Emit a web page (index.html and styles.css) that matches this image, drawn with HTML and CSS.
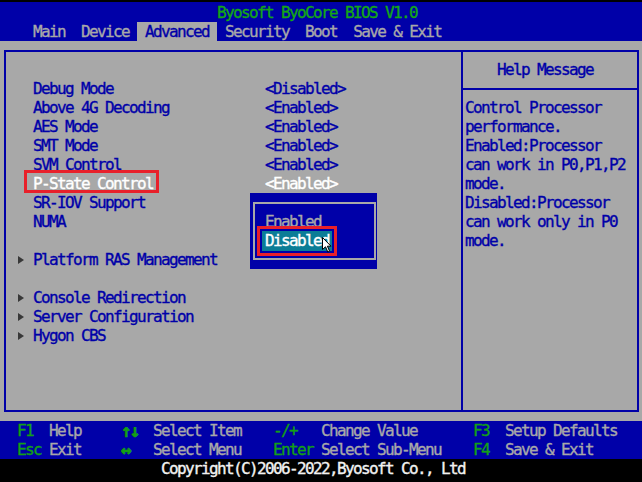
FILE: index.html
```html
<!DOCTYPE html>
<html lang="en">
<head>
  <meta charset="UTF-8">
  <meta name="viewport" content="width=device-width, initial-scale=1.0">
  <title>Byosoft ByoCore BIOS V1.0</title>
  <link rel="stylesheet" href="styles.css">
</head>
<body>
  <div class="screen">
    <div class="topbar">
      <div class="title">Byosoft ByoCore BIOS V1.0</div>
      <div class="tabs">
        <span class="tab">Main</span>
        <span class="tab">Device</span>
        <span class="tab active">Advanced</span>
        <span class="tab">Security</span>
        <span class="tab">Boot</span>
        <span class="tab">Save &amp; Exit</span>
      </div>
    </div>

    <div class="main">
      <div class="frame">
        <div class="settings">
          <div class="row"><span class="label">Debug Mode</span><span class="value">&lt;Disabled&gt;</span></div>
          <div class="row"><span class="label">Above 4G Decoding</span><span class="value">&lt;Enabled&gt;</span></div>
          <div class="row"><span class="label">AES Mode</span><span class="value">&lt;Enabled&gt;</span></div>
          <div class="row"><span class="label">SMT Mode</span><span class="value">&lt;Enabled&gt;</span></div>
          <div class="row"><span class="label">SVM Control</span><span class="value">&lt;Enabled&gt;</span></div>
          <div class="row selected"><span class="label"><span class="mark">P-State Control</span></span><span class="value">&lt;Enabled&gt;</span></div>
          <div class="row"><span class="label">SR-IOV Support</span></div>
          <div class="row"><span class="label">NUMA</span></div>
          <div class="row"></div>
          <div class="row"><span class="arrow"></span><span class="label">Platform RAS Management</span></div>
          <div class="row"></div>
          <div class="row"><span class="arrow"></span><span class="label">Console Redirection</span></div>
          <div class="row"><span class="arrow"></span><span class="label">Server Configuration</span></div>
          <div class="row"><span class="arrow"></span><span class="label">Hygon CBS</span></div>
        </div>
        <div class="help">
          <div class="help-title">Help Message</div>
          <div class="help-text">
            <div>Control Processor</div>
            <div>performance.</div>
            <div>Enabled:Processor</div>
            <div>can work in P0,P1,P2</div>
            <div>mode.</div>
            <div>Disabled:Processor</div>
            <div>can work only in P0</div>
            <div>mode.</div>
          </div>
        </div>
      </div>
    </div>

    <div class="footer">
      <span class="key">F1</span><span class="desc">Help</span>
      <span class="key sym">↑↓</span><span class="desc">Select Item</span>
      <span class="key">-/+</span><span class="desc">Change Value</span>
      <span class="key">F3</span><span class="desc">Setup Defaults</span>
      <span class="key">Esc</span><span class="desc">Exit</span>
      <span class="key sym">↔</span><span class="desc">Select Menu</span>
      <span class="key">Enter</span><span class="desc">Select Sub-Menu</span>
      <span class="key">F4</span><span class="desc">Save &amp; Exit</span>
    </div>
    <div class="copyright">Copyright(C)2006-2022,Byosoft Co., Ltd</div>

    <div class="popup">
      <div class="option">Enabled</div>
      <div class="option"><span class="option-on">Disabled</span></div>
      <svg class="cursor" width="10" height="16" viewBox="0 0 10 16">
        <path d="M0.5 0.5 L0.5 12.5 L3.5 9.8 L5.8 15 L7.6 14.2 L5.4 9.2 L9 9.2 Z" fill="#fff" stroke="#000" stroke-width="1"/>
      </svg>
    </div>
  </div>
</body>
</html>
```

FILE: styles.css
```css
body {
  margin: 0;
  padding: 0;
  background: #000;
}
.screen {
  position: relative;
  width: 642px;
  height: 482px;
  overflow: hidden;
  font-family: "DejaVu Sans Mono", "Liberation Mono", monospace;
  font-size: 16px;
  letter-spacing: -1.63px;
  line-height: 19px;
  white-space: nowrap;
  -webkit-text-stroke: 0.35px currentColor;
}
.topbar {
  margin-top: 2px;
  padding-top: 1px;
  height: 38px;
  background: #0000a8;
}
.title {
  height: 19px;
  padding-left: 217px;
  color: #14a814;
}
.tabs {
  display: flex;
  height: 19px;
  padding-left: 25px;
}
.tab {
  padding: 0 8px;
  color: #a8a8a8;
}
.tab.active {
  background: #a8a8a8;
  color: #0000a8;
}
.main {
  height: 362px;
  padding: 9px 3px 9px 4px;
  background: #a8a8a8;
}
.frame {
  display: grid;
  grid-template-columns: 455px 1fr;
  height: 358px;
  border: 2px solid #0000a8;
}
.settings {
  padding: 27px 0 0 27px;
  color: #0000a8;
}
.row {
  display: flex;
  align-items: center;
  height: 19px;
}
.label {
  width: 232px;
}
.selected .label,
.selected .value {
  color: #fff;
}
.mark {
  position: relative;
}
.mark::after {
  content: "";
  position: absolute;
  left: -9px;
  right: -6px;
  top: -4px;
  bottom: 0;
  border: 3px solid #e8202a;
}
.arrow {
  width: 0;
  height: 0;
  margin-left: -15px;
  margin-right: 9px;
  border-left: 6px solid #383838;
  border-top: 4px solid transparent;
  border-bottom: 4px solid transparent;
}
.help {
  border-left: 2px solid #0000a8;
  color: #0000a8;
}
.help-title {
  height: 28px;
  padding: 8px 0 0 34px;
  border-bottom: 2px solid #0000a8;
}
.help-text {
  padding: 8px 0 0 2px;
}
.footer {
  display: grid;
  grid-template-columns: 32px 72px 32px 120px 48px 152px 32px auto;
  height: 38px;
  padding-left: 17px;
  background: #0000a8;
}
.key {
  color: #14a014;
}
.sym {
  font-weight: bold;
  font-size: 18px;
  letter-spacing: -2px;
  -webkit-text-stroke: 0.6px currentColor;
}
.desc {
  color: #a8a8a8;
}
.copyright {
  height: 23px;
  padding-left: 161px;
  color: #f2f2f2;
}
.popup {
  position: absolute;
  left: 250px;
  top: 193px;
  width: 112px;
  height: 38px;
  padding: 19px 0 19px 15px;
  background: #0000a8;
}
.popup::before {
  content: "";
  position: absolute;
  left: 3px;
  top: 9px;
  width: 119px;
  height: 54px;
  border: 2px solid #a8a8a8;
}
.option {
  position: relative;
  height: 19px;
  color: #a8a8a8;
}
.option-on {
  position: relative;
  display: inline-block;
  margin-left: -3px;
  padding: 0 3px;
  height: 20px;
  background: #0b7d96;
  color: #fff;
}
.option-on::after {
  content: "";
  position: absolute;
  left: -5px;
  right: -5px;
  top: -5px;
  bottom: -5px;
  border: 3px solid #e8202a;
}
.cursor {
  position: absolute;
  left: 72px;
  top: 44px;
}
```
